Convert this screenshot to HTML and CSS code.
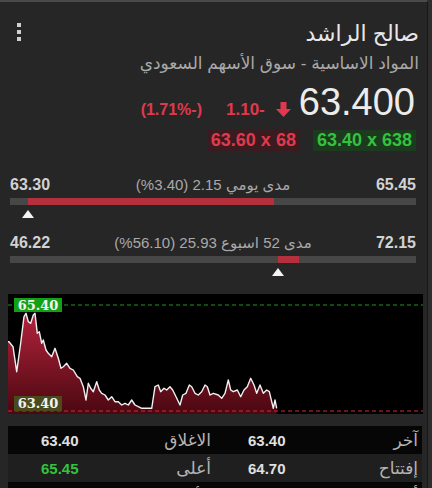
FILE: index.html
```html
<!DOCTYPE html>
<html lang="ar">
<head>
  <meta charset="UTF-8">
  <meta name="viewport" content="width=device-width, initial-scale=1.0">
  <title>صالح الراشد</title>
  <link rel="stylesheet" href="styles.css">
</head>
<body>
  <div class="panel" dir="rtl">
    <div class="head">
      <div class="names">
        <h1 class="title">صالح الراشد</h1>
        <p class="sub">المواد الاساسية - سوق الأسهم السعودي</p>
      </div>
      <div class="kebab"><span></span><span></span><span></span></div>
    </div>

    <div class="price-row">
      <span class="price">63.400</span>
      <svg class="arrow" width="15" height="15" viewBox="0 0 15 15">
        <path d="M4.5 0h6v7h4.5l-7.5 8-7.5-8h4.5z" fill="#e0394d"/>
      </svg>
      <span class="chg">-1.10</span>
      <span class="chg pct">(-1.71%)</span>
    </div>

    <div class="quotes">
      <span class="quote bid">63.40 x 638</span>
      <span class="quote ask">63.60 x 68</span>
    </div>

    <div class="range">
      <div class="range-top">
        <span class="num">65.45</span>
        <span class="cap" dir="ltr">(%3.40) 2.15 مدى يومي</span>
        <span class="num">63.30</span>
      </div>
      <div class="bar"><div class="fill" style="left: 4.4%; width: 60.6%;"></div></div>
      <div class="marker-row"><span class="marker" style="margin-left: 12px;"></span></div>
    </div>

    <div class="range">
      <div class="range-top">
        <span class="num">72.15</span>
        <span class="cap" dir="ltr">(%56.10) 25.93 مدى 52 اسبوع</span>
        <span class="num">46.22</span>
      </div>
      <div class="bar"><div class="fill" style="left: 66%; width: 5.2%;"></div></div>
      <div class="marker-row"><span class="marker" style="margin-left: 262px;"></span></div>
    </div>

    <div class="chart">
      <svg width="415" height="120" viewBox="0 0 415 120">
        <defs>
          <linearGradient id="area" x1="0" y1="0" x2="0" y2="1">
            <stop offset="0" stop-color="#b3223c"/>
            <stop offset="1" stop-color="#4a0810"/>
          </linearGradient>
        </defs>
        <path fill="url(#area)" d="M0 120V47.7L1 47.7L5 52.7L8.7 77.7L12.7 49L16 22.7L18 19.3L20.3 27.7L22.7 29.3L25.3 21L27 19.3L29.3 39.3L31.3 37.7L33.7 49.3L35.3 46L38 56L40.3 59.3L43.7 62.7L47 54.3L50.3 64.3L53 74.3L55.3 72.7L58.7 69.3L62 74.3L65.3 76L69.3 82.7L72 84.3L75.3 92.7L78 106L80.3 89.3L82.7 94.3L85.3 97.7L88.7 87.7L91.3 96L93.7 99.3L97 101L100.3 106L103.7 102.7L107 107.7L110.3 107.7L113.7 111L117 109.3L120.3 111L123.7 106L127 111L130.3 112.7L133.7 114.3L138.7 114.3L143.7 114.3L147 92.7L150.3 91L152.7 97.7L156 94.3L158.7 96L162 92.7L164.7 96L168 102.7L172 111L174.7 101L178 99.3L181.3 91L183.7 92.7L187 99.3L190.3 101L193.7 97.7L197 91L199.3 92.7L202 101L205.3 99.3L210.3 101L213.7 104.3L217 99.3L220.3 86L222.7 96L225.3 97.7L229.3 96L232.7 102.7L236 96L239.3 92.7L242.7 84.3L246 91L248.7 99.3L252 91L255.3 99.3L258.7 96L261.3 97.7L263.7 107.7L265.3 114.3L267 106L268.7 114.3V120Z"/>
        <polyline fill="none" stroke="#f0f0f0" stroke-width="1.4" stroke-linejoin="round" points="0,47.7 1,47.7 5,52.7 8.7,77.7 12.7,49 16,22.7 18,19.3 20.3,27.7 22.7,29.3 25.3,21 27,19.3 29.3,39.3 31.3,37.7 33.7,49.3 35.3,46 38,56 40.3,59.3 43.7,62.7 47,54.3 50.3,64.3 53,74.3 55.3,72.7 58.7,69.3 62,74.3 65.3,76 69.3,82.7 72,84.3 75.3,92.7 78,106 80.3,89.3 82.7,94.3 85.3,97.7 88.7,87.7 91.3,96 93.7,99.3 97,101 100.3,106 103.7,102.7 107,107.7 110.3,107.7 113.7,111 117,109.3 120.3,111 123.7,106 127,111 130.3,112.7 133.7,114.3 138.7,114.3 143.7,114.3 147,92.7 150.3,91 152.7,97.7 156,94.3 158.7,96 162,92.7 164.7,96 168,102.7 172,111 174.7,101 178,99.3 181.3,91 183.7,92.7 187,99.3 190.3,101 193.7,97.7 197,91 199.3,92.7 202,101 205.3,99.3 210.3,101 213.7,104.3 217,99.3 220.3,86 222.7,96 225.3,97.7 229.3,96 232.7,102.7 236,96 239.3,92.7 242.7,84.3 246,91 248.7,99.3 252,91 255.3,99.3 258.7,96 261.3,97.7 263.7,107.7 265.3,114.3 267,106 268.7,114.3"/>
        <line x1="0" y1="11" x2="415" y2="11" stroke="#1c9a1c" stroke-width="1" stroke-dasharray="4 3"/>
        <line x1="0" y1="117" x2="415" y2="117" stroke="#d8283c" stroke-width="1" stroke-dasharray="4 3"/>
        <rect x="6" y="4" width="48" height="14" fill="#14a014"/>
        <text class="tag" x="30" y="15.5" text-anchor="middle">65.40</text>
        <rect x="6" y="102" width="48" height="15" fill="#4a4a1c"/>
        <text class="tag" x="30" y="114" text-anchor="middle">63.40</text>
      </svg>
    </div>

    <table class="stats">
      <tr>
        <td class="lbl">آخر</td>
        <td class="val">63.40</td>
        <td class="lbl">الاغلاق</td>
        <td class="val">63.40</td>
      </tr>
      <tr class="alt">
        <td class="lbl">إفتتاح</td>
        <td class="val">64.70</td>
        <td class="lbl">أعلى</td>
        <td class="val up">65.45</td>
      </tr>
      <tr>
        <td class="lbl">أدنى</td>
        <td class="val down">63.30</td>
        <td class="lbl">الأعلى سنوي</td>
        <td class="val">72.15</td>
      </tr>
    </table>
  </div>
</body>
</html>
```

FILE: styles.css
```css
* {
  margin: 0;
  padding: 0;
  box-sizing: border-box;
}

html,
body {
  height: 100%;
  overflow: hidden;
}

body {
  font-family: "Liberation Sans", "DejaVu Sans", sans-serif;
  background-color: #2e2e2e;
  color: #e6e6e6;
}

.panel {
  width: 428px;
  height: 488px;
  background-color: #262626;
  border-top: 2px solid #4a4a4a;
  border-right: 1px solid #171717;
  overflow: hidden;
}

.head {
  display: flex;
  justify-content: space-between;
  padding: 18px 8px 0 17px;
}

.title {
  font-size: 22px;
  font-weight: normal;
  line-height: 28px;
  color: #e8e8e8;
}

.sub {
  margin-top: 4px;
  font-size: 17px;
  line-height: 23px;
  color: #a9a9a9;
}

.kebab {
  display: flex;
  flex-direction: column;
  gap: 3px;
  padding-top: 3px;
}

.kebab span {
  width: 4px;
  height: 4px;
  background-color: #d0d0d0;
}

.price-row {
  display: flex;
  align-items: baseline;
  gap: 8px;
  padding: 8px 12px 0 0;
}

.price {
  font-size: 38px;
  line-height: 38px;
  color: #ececec;
}

.arrow {
  align-self: flex-end;
  margin-bottom: 4px;
  margin-left: 3px;
}

.chg {
  font-size: 17px;
  font-weight: bold;
  color: #e0394d;
}

.pct {
  font-size: 16px;
  margin-right: 16px;
}

.quotes {
  display: flex;
  gap: 13px;
  padding: 9px 11px 0 0;
  margin-bottom: 24px;
}

.quote {
  font-size: 18px;
  font-weight: bold;
  line-height: 21px;
  padding: 0 4px;
  direction: ltr;
}

.bid {
  background-color: #1b3a1e;
  color: #34c23e;
}

.ask {
  background-color: #3a1b1f;
  color: #e0394d;
}

.range {
  padding: 0 11px 0 10px;
}

.range + .range {
  margin-top: 9px;
}

.range-top {
  display: flex;
  justify-content: space-between;
  align-items: center;
  height: 20px;
}

.num {
  font-size: 16px;
  font-weight: bold;
  color: #d2d2d2;
}

.cap {
  font-size: 15px;
  color: #a9a9a9;
}

.bar {
  position: relative;
  height: 7px;
  margin-top: 3px;
  background-color: #474747;
}

.fill {
  position: absolute;
  top: 0;
  bottom: 0;
  background-color: #b3303c;
}

.marker-row {
  direction: ltr;
  display: flex;
  height: 19px;
  padding-top: 5px;
}

.marker {
  width: 0;
  height: 0;
  border-left: 6px solid transparent;
  border-right: 6px solid transparent;
  border-bottom: 8px solid #f4f4f4;
}

.chart {
  margin: 12px 4px 0 0;
  width: 415px;
  height: 120px;
  background-color: #000;
}

.chart svg {
  display: block;
}

.tag {
  font-family: "DejaVu Serif", serif;
  font-size: 13px;
  font-weight: bold;
  fill: #f2f2f2;
}

.stats {
  width: 414px;
  margin: 12px 5px 0 0;
  border-collapse: collapse;
  table-layout: fixed;
}

.stats td {
  height: 28px;
  font-size: 15px;
  white-space: nowrap;
}

.stats tr {
  background-color: #060606;
}

.stats tr.alt {
  background-color: #1f1f1f;
}

.stats td.lbl {
  text-align: right;
  padding-right: 4px;
  font-size: 17px;
  color: #b5b5b5;
}

.val {
  text-align: center;
  font-weight: bold;
  color: #e0e0e0;
}

.up {
  color: #34c23e;
}

.down {
  color: #e0394d;
}
```
